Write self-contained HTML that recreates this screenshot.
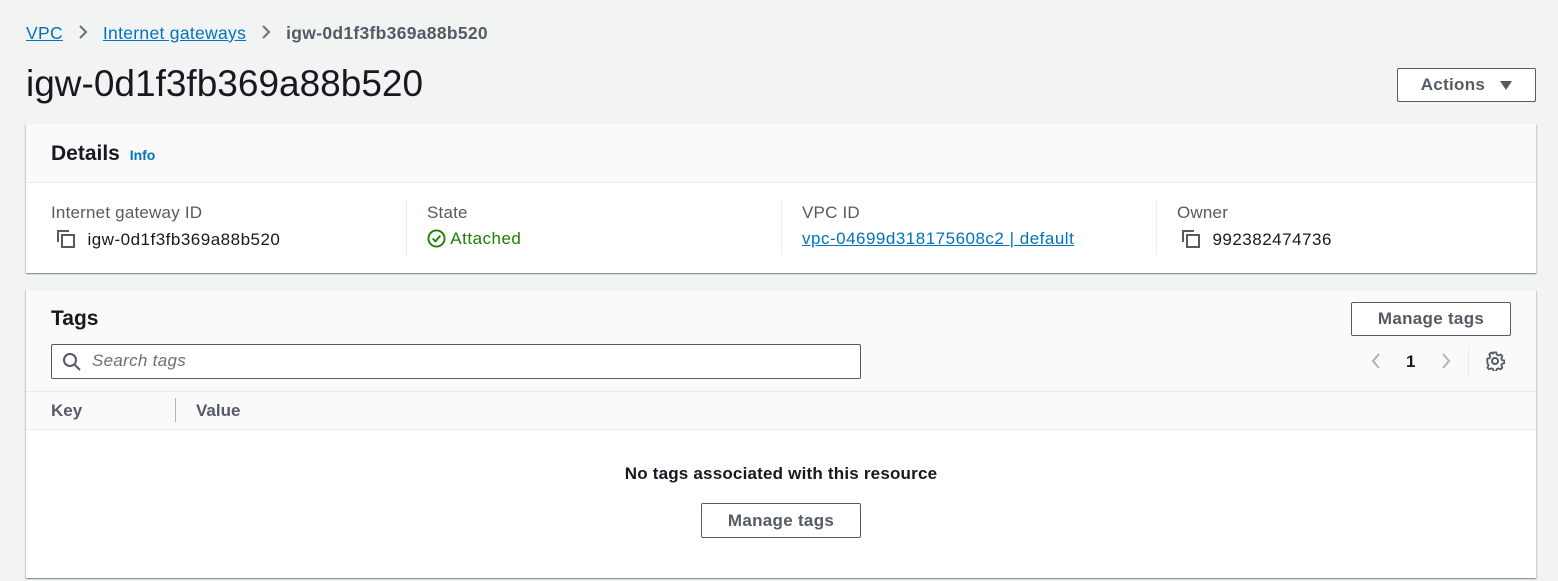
<!DOCTYPE html>
<html><head><style>
*{box-sizing:border-box;margin:0;padding:0}
body{width:1558px;height:581px;background:#f2f3f3;font-family:"Liberation Sans",sans-serif;color:#16191f;position:relative;overflow:hidden}
.a{position:absolute}
a{color:#0073bb;text-decoration:underline}
.btn{position:absolute;border:1px solid #545b64;border-radius:2px;background:#fff;font-weight:bold;color:#545b64;font-size:17px;letter-spacing:0.3px;display:flex;align-items:center;justify-content:center}
.panel{position:absolute;left:26px;width:1510px;background:#fff;box-shadow:0 1px 1px rgba(0,28,36,.3),1px 1px 1px rgba(0,28,36,.15),-1px 1px 1px rgba(0,28,36,.15)}
.lbl{position:absolute;font-size:17px;letter-spacing:0.2px;color:#545b64}
.val{position:absolute;font-size:17px;letter-spacing:0.5px;color:#16191f;white-space:nowrap}
.div{position:absolute;width:1px;background:#eaeded}
</style></head><body>
<div class="a" style="left:26px;top:23px;font-size:17.5px;letter-spacing:0.3px;color:#545b64;white-space:nowrap">
<a>VPC</a><span style="display:inline-block;width:40px;text-align:center">
<svg width="10" height="14" viewBox="0 0 10 14"><path d="M2 1l6 6-6 6" fill="none" stroke="#687078" stroke-width="2"/></svg></span><a>Internet gateways</a><span style="display:inline-block;width:40px;text-align:center"><svg width="10" height="14" viewBox="0 0 10 14"><path d="M2 1l6 6-6 6" fill="none" stroke="#687078" stroke-width="2"/></svg></span><b style="color:#545b64">igw-0d1f3fb369a88b520</b></div>
<div class="a" style="left:26px;top:63px;font-size:37px;color:#16191f">igw-0d1f3fb369a88b520</div>
<div class="btn" style="left:1397px;top:68px;width:139px;height:34px;color:#545b64">Actions&nbsp;&nbsp;&nbsp;<svg width="12" height="9"><path d="M0 0h12L6 9z" fill="#545b64"/></svg></div>

<div class="panel" style="top:124px;height:149px">
 <div class="a" style="left:0;top:0;width:1510px;height:59px;background:#fafafa;border-bottom:1px solid #eaeded"></div>
 <div class="a" style="left:25px;top:18px;font-size:21px;font-weight:bold">Details <span style="font-size:14px;color:#0073bb;margin-left:4px">Info</span></div>
 <div class="lbl" style="left:25px;top:79px">Internet gateway ID</div>
 <div class="val" style="left:29px;top:104px"><svg width="22" height="22" viewBox="0 0 22 22" style="vertical-align:-5px"><path d="M3 14V3h11" fill="none" stroke="#545b64" stroke-width="2"/><rect x="7" y="7" width="12" height="12" fill="none" stroke="#545b64" stroke-width="2"/></svg>&nbsp;&nbsp;igw-0d1f3fb369a88b520</div>
 <div class="div" style="left:380px;top:76px;height:55px"></div>
 <div class="lbl" style="left:401px;top:79px">State</div>
 <div class="val" style="left:401px;top:105px;color:#1d8102"><svg width="19" height="19" viewBox="0 0 20 20" style="vertical-align:-4px"><circle cx="10" cy="10" r="8.5" fill="none" stroke="#1d8102" stroke-width="2"/><path d="M6 10l3 3 5-6" fill="none" stroke="#1d8102" stroke-width="2"/></svg> Attached</div>
 <div class="div" style="left:755px;top:76px;height:55px"></div>
 <div class="lbl" style="left:776px;top:79px">VPC ID</div>
 <div class="val" style="left:776px;top:105px"><a>vpc-04699d318175608c2 | default</a></div>
 <div class="div" style="left:1130px;top:76px;height:55px"></div>
 <div class="lbl" style="left:1151px;top:79px">Owner</div>
 <div class="val" style="left:1154px;top:104px"><svg width="22" height="22" viewBox="0 0 22 22" style="vertical-align:-5px"><path d="M3 14V3h11" fill="none" stroke="#545b64" stroke-width="2"/><rect x="7" y="7" width="12" height="12" fill="none" stroke="#545b64" stroke-width="2"/></svg>&nbsp;&nbsp;992382474736</div>
</div>

<div class="panel" style="top:290px;height:288px">
 <div class="a" style="left:0;top:0;width:1510px;height:140px;background:#fafafa;border-bottom:1px solid #eaeded"></div>
 <div class="a" style="left:0;top:101px;width:1510px;height:1px;background:#eaeded"></div>
 <div class="a" style="left:25px;top:17px;font-size:21px;font-weight:bold">Tags</div>
 <div class="btn" style="left:1325px;top:12px;width:160px;height:34px">Manage tags</div>
 <div class="a" style="left:25px;top:54px;width:810px;height:35px;border:1px solid #545b64;border-radius:2px;background:#fff"></div>
 <svg class="a" style="left:36px;top:62px" width="20" height="20" viewBox="0 0 20 20"><circle cx="8" cy="8" r="6" fill="none" stroke="#545b64" stroke-width="2"/><path d="M12.5 12.5L18 18" stroke="#545b64" stroke-width="2"/></svg>
 <div class="a" style="left:66px;top:61px;font-size:17px;letter-spacing:0.3px;font-style:italic;color:#687078">Search tags</div>
 <svg class="a" style="left:1344px;top:62px" width="12" height="18" viewBox="0 0 12 18"><path d="M9 2L3 9l6 7" fill="none" stroke="#aab7b8" stroke-width="2"/></svg>
 <div class="a" style="left:1380px;top:62px;font-size:17px;font-weight:bold">1</div>
 <svg class="a" style="left:1414px;top:62px" width="12" height="18" viewBox="0 0 12 18"><path d="M3 2l6 7-6 7" fill="none" stroke="#aab7b8" stroke-width="2"/></svg>
 <div class="div" style="left:1442px;top:55px;height:33px"></div>
 <svg class="a" style="left:1459px;top:61px" width="20" height="20" viewBox="0 0 20 20"><path d="M8.5 1.5h3l.5 2.5 2 1 2.3-1.2 2 2-1.2 2.3.9 2 2.5.5v3l-2.5.5-.9 2 1.2 2.3-2 2-2.3-1.2-2 .9-.5 2.5h-3l-.5-2.5-2-.9-2.3 1.2-2-2 1.2-2.3-.9-2L1.5 11.5v-3L4 8l.9-2-1.2-2.3 2-2L8 3z" transform="scale(.9) translate(1 0)" fill="none" stroke="#545b64" stroke-width="2" stroke-linejoin="round"/><circle cx="10" cy="10" r="3" fill="none" stroke="#545b64" stroke-width="2"/></svg>
 <div class="a" style="left:25px;top:111px;font-size:17px;font-weight:bold;color:#545b64">Key</div>
 <div class="div" style="left:149px;top:108px;height:24px;background:#aab7b8"></div>
 <div class="a" style="left:170px;top:111px;font-size:17px;font-weight:bold;color:#545b64">Value</div>
 <div class="a" style="left:0;top:174px;width:1510px;text-align:center;font-size:17px;letter-spacing:0.2px;font-weight:bold">No tags associated with this resource</div>
 <div class="btn" style="left:675px;top:213px;width:160px;height:35px">Manage tags</div>
</div>
</body></html>
